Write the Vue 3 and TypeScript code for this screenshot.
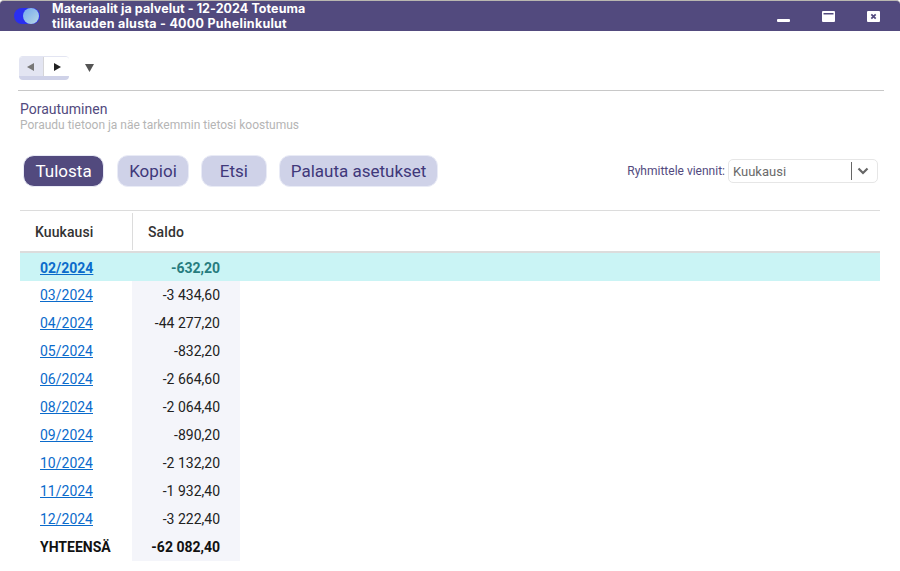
<script setup lang="ts">
interface Row {
  month: string;
  saldo: string;
}

const rows: Row[] = [
  { month: '02/2024', saldo: '-632,20' },
  { month: '03/2024', saldo: '-3 434,60' },
  { month: '04/2024', saldo: '-44 277,20' },
  { month: '05/2024', saldo: '-832,20' },
  { month: '06/2024', saldo: '-2 664,60' },
  { month: '08/2024', saldo: '-2 064,40' },
  { month: '09/2024', saldo: '-890,20' },
  { month: '10/2024', saldo: '-2 132,20' },
  { month: '11/2024', saldo: '-1 932,40' },
  { month: '12/2024', saldo: '-3 222,40' },
];

const buttons = ['Kopioi', 'Etsi', 'Palauta asetukset'];
</script>

<template>
  <div class="window">
    <header class="titlebar">
      <div class="logo"><span class="logo-a"></span><span class="logo-b"></span></div>
      <div class="title">
        <div class="line1">Materiaalit ja palvelut - 12-2024 Toteuma</div>
        <div class="line2">tilikauden alusta - 4000 Puhelinkulut</div>
      </div>
      <div class="win-btns">
        <svg width="14" height="14" viewBox="0 0 14 14"><rect x="0" y="10" width="13" height="3" rx="1" fill="#fff" /></svg>
        <svg width="14" height="14" viewBox="0 0 14 14"><path fill="#fff" fill-rule="evenodd" d="M1 2h11a1 1 0 0 1 1 1v9a1 1 0 0 1-1 1H1a1 1 0 0 1-1-1V3a1 1 0 0 1 1-1zM1.5 4v1.4h10V4z" /></svg>
        <svg width="14" height="14" viewBox="0 0 14 14"><rect x="0" y="2" width="13" height="11" rx="1" fill="#fff" /><path d="M4.3 5.3l4.4 4.4M8.7 5.3l-4.4 4.4" stroke="#524a7e" stroke-width="1.7" /></svg>
      </div>
    </header>

    <div class="toolbar">
      <div class="nav">
        <button class="nav-btn prev"><svg width="8" height="8" viewBox="0 0 8 8"><path d="M7 0v8L0 4z" fill="#777" /></svg></button>
        <button class="nav-btn next"><svg width="8" height="8" viewBox="0 0 8 8"><path d="M1 0v8l7-4z" fill="#222" /></svg></button>
      </div>
      <svg class="caret" width="10" height="9" viewBox="0 0 10 9"><path d="M0 0h9L4.5 8z" fill="#555" /></svg>
    </div>

    <section class="heading">
      <h1>Porautuminen</h1>
      <p>Poraudu tietoon ja näe tarkemmin tietosi koostumus</p>
    </section>

    <div class="actions">
      <button class="btn primary">Tulosta</button>
      <button v-for="b in buttons" :key="b" class="btn">{{ b }}</button>
      <div class="group">
        <label>Ryhmittele viennit:</label>
        <div class="select">
          <span class="value">Kuukausi</span>
          <span class="sep"></span>
          <svg width="12" height="8" viewBox="0 0 12 8"><path d="M1.5 1.5L6 6l4.5-4.5" fill="none" stroke="#666" stroke-width="2.2" /></svg>
        </div>
      </div>
    </div>

    <table class="grid">
      <thead>
        <tr>
          <th class="c1"><span class="th-in first">Kuukausi</span></th>
          <th class="c2"><span class="th-in second">Saldo</span></th>
          <th></th>
        </tr>
      </thead>
      <tbody>
        <tr v-for="(r, i) in rows" :key="r.month" :class="{ active: i === 0 }">
          <td class="c1"><a href="#">{{ r.month }}</a></td>
          <td class="c2 num">{{ r.saldo }}</td>
          <td></td>
        </tr>
        <tr class="total">
          <td class="c1">YHTEENSÄ</td>
          <td class="c2 num">-62 082,40</td>
          <td></td>
        </tr>
      </tbody>
    </table>
  </div>
</template>

<style>
html, body {
  background: #fff;
  overflow: hidden;
}
</style>

<style scoped>
.window {
  width: 900px;
  height: 571px;
  overflow: hidden;
  font-family: Roboto, sans-serif;
  background: #fff;
}

.titlebar {
  height: 31px;
  box-sizing: border-box;
  border-top: 1px solid #b9b7b0;
  border-radius: 4px 4px 0 0;
  background: #524a7e;
  display: flex;
  align-items: center;
  color: #fff;
}
.logo {
  position: relative;
  width: 26px;
  height: 16px;
  margin-left: 14px;
  flex: none;
}
.logo-a {
  position: absolute;
  left: 0;
  top: 0;
  width: 26px;
  height: 16px;
  border-radius: 8px;
  background: #2a2ff0;
}
.logo-b {
  position: absolute;
  left: 9px;
  top: 0;
  width: 16px;
  height: 16px;
  border-radius: 50%;
  background: linear-gradient(135deg, #72a8ee, #b9d9e6);
}
.title {
  margin-left: 12px;
  font-family: Inter, sans-serif;
  font-weight: 700;
  font-size: 12.5px;
  line-height: 15px;
  white-space: nowrap;
}
.line1 {
  letter-spacing: 0.07px;
}
.line2 {
  letter-spacing: 0.26px;
}
.win-btns {
  margin-left: auto;
  display: flex;
  gap: 31px;
  padding-right: 19px;
}

.toolbar {
  height: 59px;
  display: flex;
  align-items: center;
  margin-left: 18px;
  margin-right: 16px;
  border-bottom: 1px solid #c8c8c8;
}
.nav {
  display: flex;
  width: 50px;
  height: 24px;
  border-radius: 4px;
  overflow: hidden;
  margin-left: 1px;
  margin-top: 15px;
  border-bottom: 4px solid #cfd2e8;
  box-sizing: border-box;
  border-top: 1px solid #e3e5f2;
}
.nav-btn {
  border: 0;
  padding: 0;
  height: 100%;
  display: flex;
  align-items: center;
  justify-content: center;
}
.prev {
  width: 25px;
  background: #e3e5f2;
  border-right: 1px solid #d5d5d8;
}
.next {
  width: 25px;
  background: #fff;
}
.caret {
  margin-left: 16px;
  margin-top: 16px;
}

.heading {
  margin: 10px 0 0 20px;
}
.heading h1 {
  margin: 0;
  font-size: 14px;
  font-weight: 400;
  line-height: 17px;
  color: #524a7e;
}
.heading p {
  margin: 0;
  font-size: 12px;
  line-height: 15px;
  color: #b5b5b5;
}

.actions {
  display: flex;
  align-items: center;
  margin: 22px 22px 0 23px;
  height: 32px;
}
.btn {
  height: 32px;
  box-sizing: border-box;
  min-width: 66px;
  border: 1px solid #e9ebf6;
  border-radius: 11px;
  padding: 0 11px;
  margin-right: 12px;
  background: #cfd2e8;
  color: #40387a;
  font-family: Roboto, sans-serif;
  font-size: 17px;
}
.btn.primary {
  background: #524a7e;
  color: #fff;
  padding: 0 11.5px;
  margin-right: 13px;
}
.group {
  margin-left: auto;
  display: flex;
  align-items: center;
  gap: 3px;
}
.group label {
  font-size: 12px;
  color: #524a7e;
}
.select {
  width: 150px;
  height: 24px;
  box-sizing: border-box;
  border: 1px solid #e6e6e6;
  border-radius: 5px;
  display: flex;
  align-items: center;
  padding: 0 8px 0 4px;
}
.value {
  flex: 1;
  font-size: 13px;
  color: #6a6a6a;
}
.sep {
  width: 1px;
  height: 18px;
  background: #666;
  margin-right: 5px;
}

.grid {
  margin: 23px 20px 0;
  width: 860px;
  border-collapse: collapse;
  table-layout: fixed;
  font-size: 14px;
}
.grid th {
  height: 40px;
  padding: 0;
  border-top: 1px solid #dcdcdc;
  border-bottom: 2px solid #dcdcdc;
  text-align: left;
  font-weight: 500;
  letter-spacing: 0.1px;
  color: #333;
}
.c1 {
  width: 112px;
}
.c2 {
  width: 108px;
}
.th-in {
  display: flex;
  align-items: center;
  box-sizing: border-box;
  height: 37px;
  padding: 2px 0 0 15px;
}
.th-in.second {
  border-left: 1px solid #dcdcdc;
}
.grid td {
  box-sizing: border-box;
  height: 28px;
  padding: 0;
  color: #222;
}
.grid .active td {
  height: 29px;
  padding-top: 2px;
}
.grid td.c1 {
  padding-left: 20px;
}
.grid td.c2 {
  background: #f4f5fa;
  padding-right: 20px;
  text-align: right;
}
.grid a {
  color: #0b6bcb;
}
.active td,
.grid .active td.c2 {
  background: #caf4f5;
  font-weight: 700;
  color: #267c7e;
}
.total td {
  font-weight: 700;
  color: #111;
}
</style>
